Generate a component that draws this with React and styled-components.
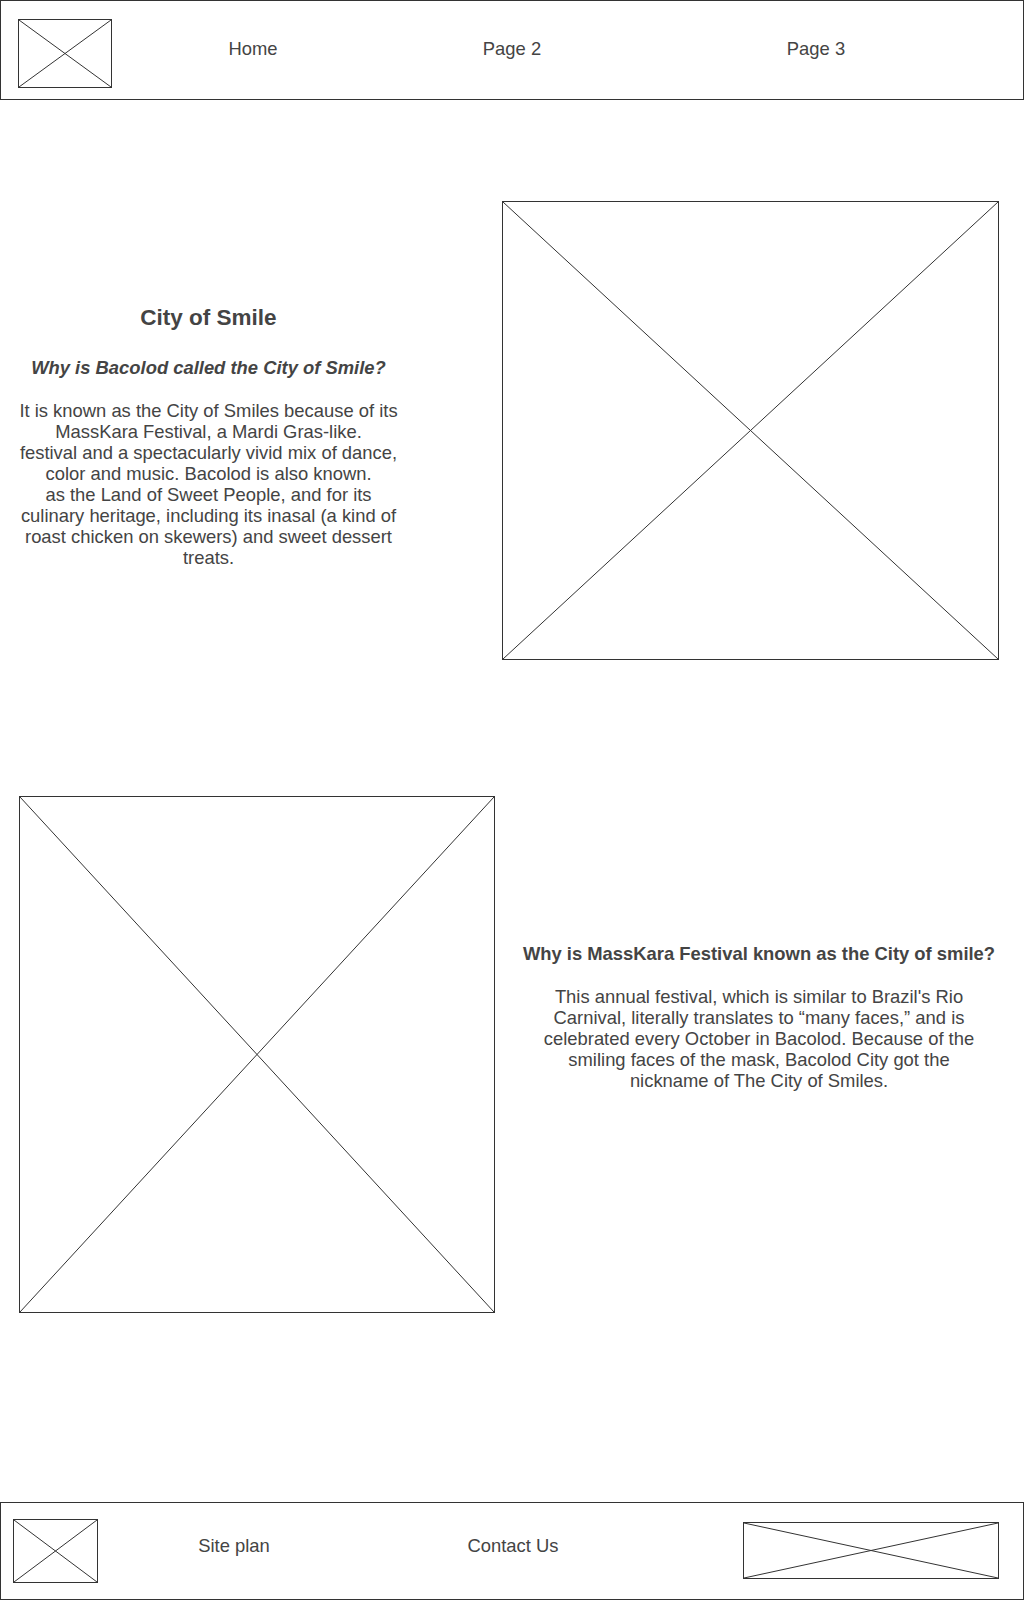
import React from "react";
import styled, { createGlobalStyle } from "styled-components";

const GlobalStyle = createGlobalStyle`
  body {
    margin: 0;
    background: #fff;
    font-family: "Liberation Sans", Arial, sans-serif;
    color: #444444;
  }
`;

function Placeholder({ width, height, className }) {
  return (
    <Frame $w={width} $h={height} className={className}>
      <svg width="100%" height="100%" viewBox="0 0 100 100" preserveAspectRatio="none">
        <line x1="0" y1="0" x2="100" y2="100" stroke="#333" strokeWidth="1" vectorEffect="non-scaling-stroke" />
        <line x1="100" y1="0" x2="0" y2="100" stroke="#333" strokeWidth="1" vectorEffect="non-scaling-stroke" />
      </svg>
    </Frame>
  );
}

function App() {
  return (
    <Page>
      <GlobalStyle />

      {/* top bar */}
      <Header>
        <Logo width={94} height={69} />
        <NavLink $width={282}>Home</NavLink>
        <NavLink $width={236}>Page 2</NavLink>
        <NavLink $width={372}>Page 3</NavLink>
      </Header>

      {/* first section */}
      <Section $top={101} $height={459}>
        <TextColumn $width={417} $padTop={104}>
          <Title>City of Smile</Title>
          <Subtitle>Why is Bacolod called the City of Smile?</Subtitle>
          <Body>
            It is known as the City of Smiles because of its<br />
            MassKara Festival, a Mardi Gras-like.<br />
            festival and a spectacularly vivid mix of dance,<br />
            color and music. Bacolod is also known.<br />
            as the Land of Sweet People, and for its<br />
            culinary heritage, including its inasal (a kind of<br />
            roast chicken on skewers) and sweet dessert<br />
            treats.
          </Body>
        </TextColumn>
        <Spacer $width={85} />
        <Placeholder width={497} height={459} />
      </Section>

      {/* second section */}
      <Section $top={136} $height={517} $padLeft={19}>
        <Placeholder width={476} height={517} />
        <Spacer $width={25} />
        <TextColumn $width={478} $padTop={147}>
          <Heading>Why is MassKara Festival known as the City of smile?</Heading>
          <Body>
            This annual festival, which is similar to Brazil's Rio<br />
            Carnival, literally translates to “many faces,” and is<br />
            celebrated every October in Bacolod. Because of the<br />
            smiling faces of the mask, Bacolod City got the<br />
            nickname of The City of Smiles.
          </Body>
        </TextColumn>
      </Section>

      {/* footer */}
      <Footer>
        <FooterLogo width={85} height={64} />
        <FooterLink $width={272}>Site plan</FooterLink>
        <FooterLink $width={286}>Contact Us</FooterLink>
        <FooterBanner width={256} height={57} />
      </Footer>
    </Page>
  );
}

const Page = styled.div`
  width: 1024px;
  min-height: 1600px;
  display: flex;
  flex-direction: column;
`;

const Frame = styled.div`
  box-sizing: border-box;
  width: ${({ $w }) => $w}px;
  height: ${({ $h }) => $h}px;
  flex-shrink: 0;
  border: 1px solid #333;
  overflow: hidden;

  svg {
    display: block;
  }
`;

const Header = styled.header`
  box-sizing: border-box;
  height: 100px;
  border: 1px solid #333;
  display: flex;
  align-items: flex-start;
  padding-left: 17px;
`;

const Logo = styled(Placeholder)`
  margin-top: 18px;
`;

const NavLink = styled.div`
  width: ${({ $width }) => $width}px;
  flex-shrink: 0;
  text-align: center;
  font-size: 18.4px;
  line-height: 21px;
  margin-top: 37px;
`;

const Section = styled.section`
  display: flex;
  align-items: flex-start;
  margin-top: ${({ $top }) => $top}px;
  height: ${({ $height }) => $height}px;
  padding-left: ${({ $padLeft }) => $padLeft || 0}px;
`;

const Spacer = styled.div`
  width: ${({ $width }) => $width}px;
  flex-shrink: 0;
`;

const TextColumn = styled.div`
  width: ${({ $width }) => $width}px;
  flex-shrink: 0;
  padding-top: ${({ $padTop }) => $padTop}px;
  text-align: center;
  white-space: nowrap;
`;

const Title = styled.h1`
  margin: 0 0 26px;
  font-size: 22.5px;
  line-height: 26px;
  font-weight: 700;
`;

const Subtitle = styled.h2`
  margin: 0 0 22px;
  font-size: 18.4px;
  line-height: 21px;
  font-weight: 700;
  font-style: italic;
`;

const Heading = styled.h2`
  margin: 0 0 22px;
  font-size: 18.4px;
  line-height: 21px;
  font-weight: 700;
`;

const Body = styled.p`
  margin: 0;
  font-size: 18.4px;
  line-height: 21px;
`;

const Footer = styled.footer`
  box-sizing: border-box;
  margin-top: 189px;
  height: 98px;
  border: 1px solid #333;
  display: flex;
  align-items: flex-start;
  padding-left: 12px;
`;

const FooterLogo = styled(Placeholder)`
  margin-top: 16px;
`;

const FooterLink = styled.div`
  width: ${({ $width }) => $width}px;
  flex-shrink: 0;
  text-align: center;
  font-size: 18.4px;
  line-height: 21px;
  margin-top: 32px;
`;

const FooterBanner = styled(Placeholder)`
  margin-left: auto;
  margin-right: 24px;
  margin-top: 19px;
`;

export default App;
